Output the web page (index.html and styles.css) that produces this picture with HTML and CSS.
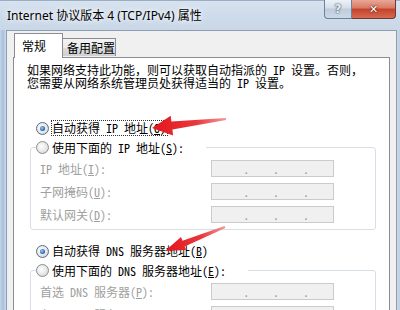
FILE: index.html
```html
<!DOCTYPE html>
<html>
<head>
  <meta charset="utf-8">
  <title>Internet 协议版本 4 (TCP/IPv4) 属性</title>
  <link rel="stylesheet" href="styles.css">
</head>
<body>
<div class="window">
  <div class="titlebar">
    <span class="title">Internet 协议版本 4 (TCP/IPv4) 属性</span>
    <div class="caption">
      <span class="btn help">?</span>
      <span class="btn close">&#x2715;</span>
    </div>
  </div>
  <div class="client">
    <div class="tabs">
      <div class="tab active">常规</div>
      <div class="tab">备用配置</div>
    </div>
    <div class="page">
      <p class="intro">如果网络支持此功能，则可以获取自动指派的 IP 设置。否则，<br>您需要从网络系统管理员处获得适当的 IP 设置。</p>

      <div class="option first"><span class="radio on"></span><span class="label focus">自动获得 IP 地址(<u>O</u>)</span></div>
      <fieldset class="group">
        <legend><div class="option"><span class="radio"></span><span class="label">使用下面的 IP 地址(<u>S</u>):</span></div></legend>
        <div class="field"><span class="field-label">IP 地址(<u>I</u>):</span><span class="ip"><i></i>.<i></i>.<i></i>.<i></i></span></div>
        <div class="field"><span class="field-label">子网掩码(<u>U</u>):</span><span class="ip"><i></i>.<i></i>.<i></i>.<i></i></span></div>
        <div class="field"><span class="field-label">默认网关(<u>D</u>):</span><span class="ip"><i></i>.<i></i>.<i></i>.<i></i></span></div>
      </fieldset>

      <div class="option dns"><span class="radio on"></span><span class="label">自动获得 DNS 服务器地址(<u>B</u>)</span></div>
      <fieldset class="group">
        <legend><div class="option"><span class="radio"></span><span class="label">使用下面的 DNS 服务器地址(<u>E</u>):</span></div></legend>
        <div class="field"><span class="field-label">首选 DNS 服务器(<u>P</u>):</span><span class="ip"><i></i>.<i></i>.<i></i>.<i></i></span></div>
        <div class="field"><span class="field-label">备用 DNS 服务器(<u>A</u>):</span><span class="ip"><i></i>.<i></i>.<i></i>.<i></i></span></div>
      </fieldset>
    </div>
  </div>

  <!-- red annotation arrows drawn over the dialog -->
  <svg class="arrows" width="400" height="310" viewBox="0 0 400 310">
    <defs>
      <linearGradient id="red1" x1="0" y1="0" x2="1" y2="0">
        <stop offset="0" stop-color="#e3161c"/>
        <stop offset="0.6" stop-color="#e8383c"/>
        <stop offset="1" stop-color="#f39a9a"/>
      </linearGradient>
    </defs>
    <polygon fill="url(#red1)" points="152,128 170.7,115.7 171.4,121.6 225.9,118 226.2,120 172.4,129.6 173.1,135.5"/>
    <polygon fill="url(#red1)" points="165,251 181,237 182.5,240.8 224.6,226 225.4,228 184.7,246.4 186.2,250.1"/>
  </svg>
</div>
</body>
</html>
```

FILE: styles.css
```css
body { margin: 0; width: 400px; height: 310px; overflow: hidden; font-family: "Noto Sans Mono CJK SC", "Noto Sans CJK SC", sans-serif; font-size: 12px; color: #000; }

.window {
  position: relative;
  display: flex;
  flex-direction: column;
  height: 310px;
  overflow: hidden;
  background: linear-gradient(90deg, #c4d5e8 0, #a9c0da 3px, #cddcec 6px, #d3dfec 394px, #c0d1e4 400px);
}

.titlebar {
  flex-shrink: 0;
  height: 30px;
  display: flex;
  align-items: center;
  padding-left: 7px;
  background: linear-gradient(180deg, #d7e2ee, #ccdaea 60%, #c9d7e7);
  border-top: 1px solid #9aaec6;
  box-sizing: border-box;
}
.title { font-family: "Noto Sans", "Noto Sans CJK SC", sans-serif; font-size: 12px; text-shadow: 0 0 5px #fff, 0 0 8px #fff; padding-bottom: 1px; }

.caption { margin-left: auto; margin-right: 4px; align-self: flex-start; display: flex; margin-top: -1px; }
.btn {
  height: 19px;
  box-sizing: border-box;
  display: flex;
  align-items: center;
  justify-content: center;
  font-family: "DejaVu Sans", sans-serif;
  font-weight: bold;
  color: #fff;
}
.help {
  width: 28px;
  font-size: 12px;
  background: linear-gradient(180deg, #eef2f7, #d5dee9 45%, #bfcbdb 50%, #cdd9e7);
  border: 1px solid #6f819a;
  border-top: none;
  border-radius: 0 0 0 4px;
  color: #e8eef5;
  text-shadow: 0 0 1px #3c4c63, 0 0 2px #3c4c63;
}
.close {
  width: 44px;
  font-size: 11px;
  background: linear-gradient(180deg, #e9a898, #d87963 45%, #c4432b 50%, #d56a50);
  border: 1px solid #6a3a38;
  border-left: none;
  border-top: none;
  border-radius: 0 0 4px 0;
  text-shadow: 0 0 1px #5a1a10, 0 0 2px #5a1a10;
}

.client {
  flex: 1;
  min-height: 0;
  overflow: hidden;
  margin: 0 3px 0 6px;
  border: 1px solid #8b9cb3;
  border-bottom: none;
  background: #f0f0f0;
  padding: 2px 0 0 6px;
}

.tabs { display: flex; align-items: flex-end; padding-left: 1px; height: 24px; position: relative; z-index: 1; }
.tab {
  box-sizing: border-box;
  height: 18px;
  width: 53px;
  padding-left: 4px;
  line-height: 17px;
  border: 1px solid #898c95;
  border-bottom: none;
  border-left: none;
  background: linear-gradient(180deg, #f3f3f3, #ebebeb 50%, #dddddd 51%, #cfcfcf);
  margin-bottom: 1px;
}
.tab.active {
  height: 25px;
  width: 49px;
  padding-left: 7px;
  line-height: 23px;
  border-left: 1px solid #898c95;
  background: #fff;
  margin-bottom: -1px;
}

.page {
  width: 377px;
  box-sizing: border-box;
  background: #fff;
  border: 1px solid #898c95;
  padding: 5px 12px 20px 13px;
}

.intro { margin: 0; line-height: 13px; white-space: nowrap; }

.option { display: flex; align-items: center; height: 20px; padding-left: 9px; white-space: nowrap; }
.option.first { margin-top: 29px; }
.option.dns { margin-top: 11px; }
legend .option { height: 19px; padding-left: 0; }

.radio {
  width: 13px;
  height: 13px;
  box-sizing: border-box;
  border-radius: 50%;
  border: 1px solid #8a8c90;
  background: radial-gradient(circle at 40% 40%, #ffffff, #e6e6e6 55%, #c9c9c9);
  margin-right: 2px;
  display: flex;
  align-items: center;
  justify-content: center;
}
.radio.on { border-color: #5b6c86; }
.radio.on::after {
  content: "";
  width: 5px;
  height: 5px;
  border-radius: 50%;
  background: radial-gradient(circle at 40% 40%, #9ad0ff, #2c6cb8 60%, #173f7a);
}
.label { border: 1px dotted transparent; padding: 0 1px 0 0; line-height: 14px; }
.label.focus { border-color: #333; }

.group {
  margin: 0 1px 0 3px;
  padding: 0 0 3px 0;
  border: 1px solid #d5dfe5;
  border-radius: 3px;
}
.group legend { margin-left: 5px; padding: 0 20px 0 0; }

.field { display: flex; align-items: center; height: 23px; padding-left: 9px; color: #a0a0a0; }
.field-label { width: 171px; white-space: nowrap; }
.ip {
  width: 123px;
  height: 17px;
  box-sizing: border-box;
  border: 1px solid #cbcbcb;
  background: #f0f0f0;
  display: flex;
  align-items: flex-end;
  line-height: 14px;
  color: #9a9a9a;
}
.ip i { flex: 1; }
.ip i:first-child { flex: 1.3; }

.arrows { position: absolute; left: 0; top: 0; pointer-events: none; }
```
